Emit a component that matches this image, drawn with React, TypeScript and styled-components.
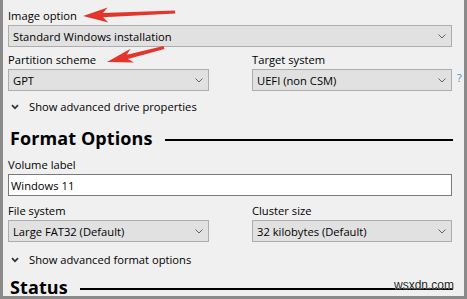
import React from "react";
import styled, { createGlobalStyle } from "styled-components";

const Global = createGlobalStyle`
  html, body { margin: 0; padding: 0; background: #f0f0f0; }
  body { font-family: "Open Sans", "Liberation Sans", sans-serif; }
`;

const Frame = styled.div`
  position: relative;
  box-sizing: border-box;
  width: 467px;
  height: 299px;
  background: #f0f0f0;
  border-left: 3px solid #8a8a8a;
  border-right: 3px solid #8a8a8a;
  border-bottom: 3px solid #8a8a8a;
  padding: 8px 0 0 5px;
  overflow: hidden;
  font-size: 11.2px;
  color: #000;
`;

const Stack = styled.div`
  display: flex;
  flex-direction: column;
  width: 444px;
`;

const Block = styled.div<{ $mt?: number }>`
  margin-top: ${(p) => p.$mt ?? 0}px;
`;

const Row = styled.div<{ $mt?: number }>`
  display: grid;
  grid-template-columns: 201px 200px;
  column-gap: 43px;
  margin-top: ${(p) => p.$mt ?? 0}px;
`;

const Label = styled.div`
  height: 15px;
  line-height: 15px;
  margin-bottom: 2px;
  white-space: nowrap;
`;

const SelectBox = styled.div`
  box-sizing: border-box;
  height: 22px;
  border: 1px solid #adadad;
  background: #e1e1e1;
  display: flex;
  align-items: center;
  justify-content: space-between;
  padding: 0 5px 0 4px;
  white-space: nowrap;
`;

const InputBox = styled.div`
  box-sizing: border-box;
  height: 22px;
  border: 1px solid #7a7a7a;
  background: #fff;
  display: flex;
  align-items: center;
  padding: 0 2px;
`;

const WithHelp = styled.div`
  display: flex;
  align-items: center;
  width: 200px;
  & > :first-child { flex: 0 0 200px; }
`;

const Help = styled.span`
  margin-left: 5px;
  color: #3d8fd6;
  font-size: 11px;
  line-height: 12px;
  margin-top: -4px;
`;

const Expander = styled.div<{ $mt?: number }>`
  display: flex;
  align-items: center;
  height: 15px;
  line-height: 15px;
  padding-left: 3px;
  margin-top: ${(p) => p.$mt ?? 0}px;
  white-space: nowrap;
  & svg { margin-right: 10px; }
`;

const Heading = styled.div<{ $mt?: number }>`
  position: relative;
  display: flex;
  align-items: center;
  gap: 12px;
  width: 445px;
  height: 24px;
  line-height: 24px;
  margin-top: ${(p) => p.$mt ?? 0}px;
  font-family: "Open Sans", "Liberation Sans", sans-serif;
  font-weight: 700;
  font-size: 18px;
  letter-spacing: 0.1px;
  padding-left: 2px;
  box-sizing: border-box;
  flex-shrink: 0;
`;

const Rule = styled.div`
  flex: 1;
  height: 2px;
  background: #000;
  margin-top: 4px;
`;

const Watermark = styled.span`
  position: absolute;
  right: -1px;
  top: 3px;
  font-family: "Liberation Sans", sans-serif;
  font-weight: 400;
  font-size: 12px;
  line-height: 14px;
  letter-spacing: 0;
  color: #222;
  text-shadow: 0 0 1px #fff, 0 0 1px #fff;
`;

const Overlay = styled.svg`
  position: absolute;
  left: -3px;
  top: 0;
  pointer-events: none;
`;

const Chevron = () => (
  <svg width="8" height="5" viewBox="0 0 8 5">
    <path d="M0.5 0.5 L4 4 L7.5 0.5" fill="none" stroke="#606060" strokeWidth="1" />
  </svg>
);

const ExpandChevron = () => (
  <svg width="8" height="6" viewBox="0 0 8 6">
    <path d="M1 1.2 L4 4.3 L7 1.2" fill="none" stroke="#333" strokeWidth="1.8" />
  </svg>
);

const Select = ({ value }: { value: string }) => (
  <SelectBox>
    <span>{value}</span>
    <Chevron />
  </SelectBox>
);

type P = [number, number];
function arrowPoints(tip: P, tail: P, headLen: number, headHalf: number, shaftHalf: number) {
  const dx = tail[0] - tip[0];
  const dy = tail[1] - tip[1];
  const len = Math.hypot(dx, dy);
  const ux = dx / len, uy = dy / len;
  const nx = -uy, ny = ux;
  const B: P = [tip[0] + ux * headLen, tip[1] + uy * headLen];
  const N: P = [tip[0] + ux * (headLen - 5), tip[1] + uy * (headLen - 5)];
  const pts: P[] = [
    tip,
    [B[0] + nx * headHalf, B[1] + ny * headHalf],
    [N[0] + nx * shaftHalf, N[1] + ny * shaftHalf],
    [tail[0] + nx * shaftHalf * 0.75, tail[1] + ny * shaftHalf * 0.75],
    [tail[0] - nx * shaftHalf * 0.75, tail[1] - ny * shaftHalf * 0.75],
    [N[0] - nx * shaftHalf, N[1] - ny * shaftHalf],
    [B[0] - nx * headHalf, B[1] - ny * headHalf],
  ];
  return pts.map((p) => `${p[0].toFixed(1)},${p[1].toFixed(1)}`).join(" ");
}

export default function App() {
  return (
    <>
      <Global />
      <Frame>
        <Stack>
          <Block>
            <Label>Image option</Label>
            <Select value="Standard Windows installation" />
          </Block>
          <Row $mt={5}>
            <div>
              <Label>Partition scheme</Label>
              <Select value="GPT" />
            </div>
            <div>
              <Label>Target system</Label>
              <WithHelp>
                <Select value="UEFI (non CSM)" />
                <Help>?</Help>
              </WithHelp>
            </div>
          </Row>
          <Expander $mt={8}>
            <ExpandChevron />
            Show advanced drive properties
          </Expander>
          <Heading $mt={12}>
            <span>Format Options</span>
            <Rule />
          </Heading>
          <Block $mt={7}>
            <Label>Volume label</Label>
            <InputBox>Windows 11</InputBox>
          </Block>
          <Row $mt={7}>
            <div>
              <Label>File system</Label>
              <Select value="Large FAT32 (Default)" />
            </div>
            <div>
              <Label>Cluster size</Label>
              <Select value="32 kilobytes (Default)" />
            </div>
          </Row>
          <Expander $mt={10}>
            <ExpandChevron />
            Show advanced format options
          </Expander>
          <Heading $mt={8}>
            <span>Status</span>
            <Rule />
            <Watermark>wsxdn.com</Watermark>
          </Heading>
        </Stack>
        <Overlay width="467" height="299" viewBox="0 0 467 299">
          <polygon points={arrowPoints([83, 16], [175, 12], 25, 7.5, 2.2)} fill="#e2352b" />
          <polygon points={arrowPoints([107, 62], [164, 47.5], 26, 7, 2.2)} fill="#e2352b" />
        </Overlay>
      </Frame>
    </>
  );
}
